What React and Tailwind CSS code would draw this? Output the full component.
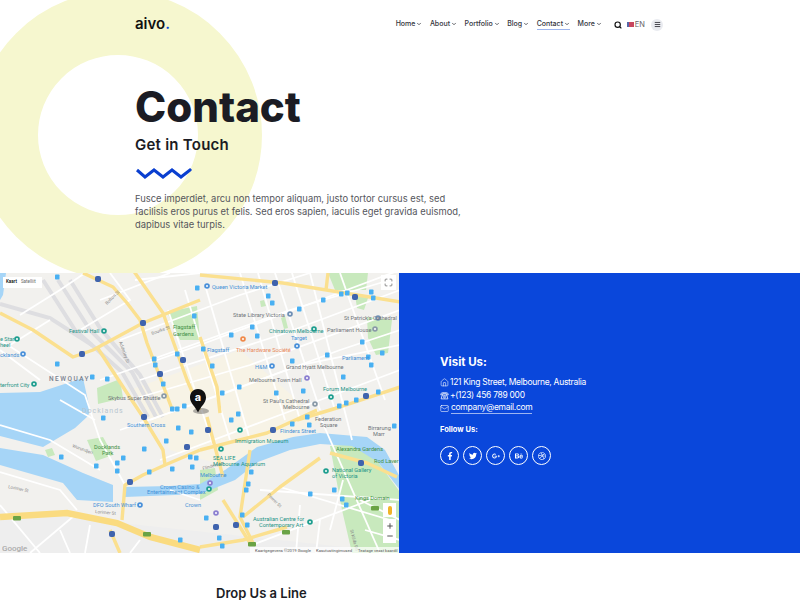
import { ChevronDown, Search, Home, Mail, Menu, Maximize, Plus, Minus } from "lucide-react";
import { FaFacebookF, FaTwitter, FaGooglePlusG, FaBehance, FaDribbble } from "react-icons/fa";

const navItems = ["Home", "About", "Portfolio", "Blog", "Contact", "More"];
const socials = [FaFacebookF, FaTwitter, FaGooglePlusG, FaBehance, FaDribbble];

const water = [
  "M0 393 L40 392 L83 378 L90 410 L88 416 L75 428 L43 447 L0 436 Z",
  "M0 448 L43 455 L83 473 L113 485 L113 502 L77 500 L63 483 L0 465 Z",
  "M125 487 L170 486 L200 484 L225 470 L257 447 L293 437 L320 433 L367 437 L385 450 L400 477 L400 490 L378 462 L352 446 L320 444 L290 450 L258 462 L235 480 L200 494 L125 497 Z",
  "M0 273 L6 273 L3 295 L0 300 Z",
];

const parks = [
  "M328 273 L368 273 L366 290 L335 290 Z",
  "M355 295 L368 298 L364 310 L357 308 Z",
  "M367 317 L392 320 L388 353 L376 355 L368 338 Z",
  "M167 312 L197 306 L200 340 L180 340 Z",
  "M97 388 L120 379 L123 398 L98 404 Z",
  "M87 440 L103 437 L113 455 L96 461 Z",
  "M45 450 L52 448 L55 455 L48 457 Z",
  "M330 446 L355 444 L378 462 L400 492 L400 553 L352 553 L342 510 Z",
  "M200 470 L215 468 L218 490 L200 500 Z",
  "M260 301 L264 300 L266 306 L261 307 Z",
  "M281 318 L285 316 L288 328 L284 329 Z",
];

const rail = [
  "M43 280 L75 330 L122 372 L148 417",
  "M58 280 L90 330 L132 372 L156 417",
  "M0 304 L50 318 L92 345",
  "M70 280 L100 328 L140 375 L163 417",
];

const roads = [
  "M0 313 L33 330 L73 357 L93 350 L143 323 L200 300",
  "M83 273 L113 287 L127 303 L140 320 L147 343 L160 377 L172 409",
  "M133 270 L163 313 L187 380 L200 410",
  "M97 347 L127 393 L143 417 L163 450 L165 465 L143 475 L125 485 L122 520",
  "M200 547 L243 540 L287 527",
  "M243 517 L280 487 L320 458",
  "M200 450 L267 433 L317 410",
  "M297 420 L340 407 L400 387",
  "M330 453 L367 463 L397 477",
  "M207 417 L223 477",
  "M250 450 L240 517 L253 543",
  "M223 500 L250 543",
  "M200 275 L283 283 L400 302",
  "M200 337 L217 387 L220 413",
  "M328 273 L326 290",
  "M165 465 L200 450",
  "M110 530 L120 553",
];

const streets = [
  "M0 340 L85 395 L100 440 L125 485",
  "M0 425 L50 440 L100 470",
  "M0 472 L60 490 L77 510",
  "M0 505 L40 553",
  "M100 380 L200 345 L320 300 L400 270",
  "M120 430 L220 395 L340 350 L400 330",
  "M130 400 L250 365 L400 310",
  "M160 460 L280 415 L400 370",
  "M135 280 L200 273",
  "M100 300 L170 273",
  "M120 340 L240 295 L310 273",
  "M150 360 L290 310 L390 280",
  "M140 380 L280 335 L400 290",
  "M150 420 L300 365 L400 345",
  "M240 273 L285 420",
  "M275 273 L320 410",
  "M205 285 L250 440",
  "M310 273 L352 440",
  "M168 310 L215 450",
  "M340 273 L385 400",
  "M185 290 L230 440",
  "M258 273 L300 420",
  "M292 273 L335 410",
  "M317 410 L380 553",
  "M260 490 L400 500",
  "M280 487 L390 520",
  "M343 480 L330 530",
  "M300 505 L296 553",
  "M320 520 L316 553",
  "M252 545 L370 500",
  "M170 490 L200 500",
  "M30 553 L75 515",
  "M70 553 L60 530",
  "M85 553 L90 525",
  "M130 553 L140 540",
  "M360 500 L400 520",
  "M365 530 L400 540",
  "M0 350 L40 380",
  "M20 315 L60 290 L85 273",
  "M10 345 L50 320",
  "M110 273 L130 300 L80 330",
  "M60 400 L95 420",
];

const transit = [
  [268, 296], [272, 303], [299, 309], [252, 327], [231, 335], [257, 336], [212, 366], [292, 361], [327, 355],
  [362, 342], [382, 353], [371, 365], [343, 377], [239, 387], [222, 393], [276, 393], [303, 391], [238, 414],
  [323, 300], [341, 294], [347, 293], [371, 292], [373, 298], [339, 406], [346, 403], [356, 400], [378, 392],
  [57, 277], [197, 288], [194, 316], [177, 354], [154, 359], [155, 365], [163, 384], [92, 377], [107, 379],
  [57, 364], [172, 409], [177, 409], [184, 406], [103, 418], [61, 457], [96, 466], [123, 458], [117, 463],
  [117, 471], [144, 449], [166, 441], [149, 472], [172, 469], [178, 428], [191, 432], [190, 457], [196, 458],
  [192, 467], [180, 540], [231, 420], [292, 424], [307, 417], [309, 425], [251, 472], [248, 484], [246, 490],
  [242, 515], [247, 525], [206, 518], [219, 538], [222, 546], [310, 494], [334, 490], [342, 499], [346, 505],
  [394, 426], [203, 349], [368, 357],
];

const shields = [
  [98, 279], [143, 323], [82, 354], [183, 360], [160, 374], [144, 417], [275, 283], [355, 297], [366, 396],
  [130, 482], [112, 534], [187, 447], [208, 430], [273, 430], [361, 463], [216, 527], [236, 525],
];

const greenShields = [[17, 518], [147, 534], [286, 532], [252, 544], [375, 508]];

const pois = [
  [207, 286, "#4a90d9"], [104, 331, "#1f9e8f"], [17, 339, "#1f9e8f"], [23, 354, "#4a90d9"], [34, 384, "#1f9e8f"],
  [164, 396, "#8a9aa8"], [290, 314, "#6f8fb5"], [314, 329, "#1f9e8f"], [297, 346, "#4a90d9"], [243, 339, "#f08a4b"],
  [272, 366, "#4a90d9"], [307, 378, "#8b7fd0"], [375, 329, "#8a9aa8"], [331, 397, "#1f9e8f"],
  [315, 404, "#8a9aa8"], [240, 430, "#1f9e8f"], [221, 449, "#1f9e8f"], [326, 471, "#1f9e8f"], [310, 522, "#1f9e8f"],
  [140, 505, "#4a90d9"], [210, 483, "#8b7fd0"], [216, 513, "#8b7fd0"], [209, 489, "#1f9e8f"], [378, 318, "#6f8fb5"],
];

const blue = "#3f8fd6";
const teal = "#1d9387";
const grey = "#70757a";
const green = "#3f8f45";

const labels = [
  [69, 333, "Festival Hall", teal],
  [173, 329, "Flagstaff", green],
  [173, 336, "Gardens", green],
  [0, 341, "e Star", teal],
  [0, 347, "heel", teal],
  [0, 357, "cklands", blue],
  [0, 387, "terfront City", teal],
  [108, 400, "Skybus Super Shuttle", grey],
  [212, 289, "Queen Victoria Market", blue],
  [233, 317, "State Library Victoria", grey],
  [269, 333, "Chinatown Melbourne", teal],
  [327, 332, "Parliament House", grey],
  [344, 320, "St Patrick's Cathedral", grey],
  [291, 340, "Target", blue],
  [207, 352, "Flagstaff", blue],
  [236, 352, "The Hardware Société", "#e8875a"],
  [342, 360, "Parliament", blue],
  [255, 369, "H&M", blue],
  [286, 369, "Grand Hyatt Melbourne", grey],
  [249, 382, "Melbourne Town Hall", grey],
  [323, 391, "Forum Melbourne", teal],
  [263, 403, "St Paul's Cathedral", grey],
  [283, 409, "Melbourne", grey],
  [315, 421, "Federation", grey],
  [320, 427, "Square", grey],
  [280, 433, "Flinders Street", blue],
  [235, 443, "Immigration Museum", teal],
  [213, 460, "SEA LIFE", teal],
  [213, 466, "Melbourne Aquarium", teal],
  [368, 430, "Birrarung", grey],
  [373, 436, "Marr", grey],
  [336, 451, "Alexandra Gardens", green],
  [374, 463, "Rod Laver", green],
  [332, 472, "National Gallery", teal],
  [332, 478, "of Victoria", teal],
  [355, 500, "Kings Domain", green],
  [253, 521, "Australian Centre for", teal],
  [259, 527, "Contemporary Art", teal],
  [127, 427, "Southern Cross", blue],
  [94, 449, "Docklands", green],
  [102, 455, "Park", green],
  [160, 489, "Crown Casino &", blue],
  [147, 494, "Entertainment Complex", blue],
  [93, 507, "DFO South Wharf", blue],
  [185, 507, "Crown", blue],
  [200, 477, "Melbourne", blue],
];

const streetNames = [
  [8, 488, "Lorimer St", 12],
  [95, 513, "Lorimer St", 5],
  [119, 342, "Adderley St", 70],
  [107, 305, "Bolton St", -45],
  [152, 335, "Bourke St", -20],
  [72, 447, "Wurundjeri", 20],
  [203, 470, "Flinders Ln", -15],
  [267, 495, "Power St", 45],
  [350, 530, "St Kilda Rd", 75],
];

function ContactMap() {
  return (
    <svg viewBox="0 273 399 280" className="w-full h-full block" style={{ fontFamily: "Roboto, sans-serif" }}>
      <rect x="0" y="273" width="399" height="280" fill="#f2f1ee" />
      <path d="M130 390 L240 350 L320 420 L240 470 L170 450 Z" fill="#f7f3e6" />
      <path d="M0 510 L400 553 L0 553 Z" fill="#eeeeee" />
      {parks.map((d) => (
        <path key={d} d={d} fill="#c8e9bd" />
      ))}
      {water.map((d) => (
        <path key={d} d={d} fill="#a6d5f7" />
      ))}
      {rail.map((d) => (
        <path key={d} d={d} fill="none" stroke="#dedee1" strokeWidth="4" />
      ))}
      {streets.map((d) => (
        <path key={d} d={d} fill="none" stroke="#ffffff" strokeWidth="1.8" />
      ))}
      {roads.map((d) => (
        <path key={d} d={d} fill="none" stroke="#fbe08f" strokeWidth="3.4" strokeLinejoin="round" />
      ))}
      <path d="M0 517 L67 513 L117 523 L150 537 L200 550" fill="none" stroke="#fadb80" strokeWidth="6.5" />
      {streetNames.map(([x, y, t, r]) => (
        <text key={t + x} x={x} y={y} fontSize="4.5" fill="#8a8a8a" transform={`rotate(${r} ${x} ${y})`}>
          {t}
        </text>
      ))}
      {transit.map(([x, y]) => (
        <rect key={`${x}-${y}`} x={x - 2} y={y - 2.5} width="4.5" height="5" rx="0.8" fill="#49b0f2" />
      ))}
      {shields.map(([x, y]) => (
        <rect key={`${x}-${y}`} x={x - 3} y={y - 3} width="6" height="6" rx="2" fill="#3f63ad" />
      ))}
      {greenShields.map(([x, y]) => (
        <rect key={`${x}-${y}`} x={x - 4} y={y - 2} width="8" height="4.5" rx="1" fill="#6aa345" />
      ))}
      {pois.map(([x, y, c]) => (
        <g key={`${x}-${y}`}>
          <circle cx={x} cy={y} r="2.8" fill={c} />
          <circle cx={x} cy={y} r="1" fill="#ffffff" />
        </g>
      ))}
      <text x="49" y="381" fontSize="6.5" fontWeight="500" letterSpacing="1.5" fill="#7a8290">
        NEWQUAY
      </text>
      <text x="82" y="413" fontSize="7" letterSpacing="1" fill="#b9c6cf">
        Docklands
      </text>
      {labels.map(([x, y, t, c]) => (
        <text key={t + x + y} x={x} y={y} fontSize="5.6" fill={c}>
          {t}
        </text>
      ))}

      {/* pin */}
      <ellipse cx="201" cy="411" rx="8" ry="3" fill="#555" opacity="0.45" />
      <path d="M198 389 C192.5 389 190 393.5 190 397.5 C190 403 195 406 198 412.5 C201 406 206 403 206 397.5 C206 393.5 203.5 389 198 389 Z" fill="#111" />
      <text x="198" y="401" fontSize="11" fontWeight="700" textAnchor="middle" fill="#fff" style={{ fontFamily: "Inter, sans-serif" }}>
        a
      </text>

      {/* map footer */}
      <text x="2" y="551" fontSize="8" fontWeight="500" fill="#9a9a9a" opacity="0.8">
        Google
      </text>
      <rect x="250" y="547" width="149" height="6" fill="#ffffff" opacity="0.7" />
      <text x="255" y="552" fontSize="4.2" fill="#555">
        Kaartgegevens ©2019 Google
      </text>
      <text x="316" y="552" fontSize="4.2" fill="#555">
        Kasutustingimused
      </text>
      <text x="358" y="552" fontSize="4.2" fill="#555">
        Teatage veast kaardil
      </text>
    </svg>
  );
}

export default function App() {
  return (
    <div className="relative h-[600px] overflow-hidden bg-white text-[#1b1c24]" style={{ fontFamily: "Inter, sans-serif" }}>
      {/* big ring behind hero */}
      <div className="absolute left-[-26px] top-[-9px] w-[288px] h-[288px] rounded-full border-[64px] border-[#f6f7cf]" />

      <header className="relative h-[49px] pl-[135px] pr-[137px] flex items-center justify-between">
        <div className="text-[15px] font-semibold text-[#111]">
          aivo<span className="text-[#0a47db]">.</span>
        </div>
        <nav className="flex items-center text-[7px] font-medium text-[#33343c]">
          <div className="flex items-center gap-[7.5px]">
            {navItems.map((item) => (
              <span
                key={item}
                className={item === "Contact" ? "flex items-center gap-[1px] border-b border-[#9db5ee]" : "flex items-center gap-[1px] border-b border-transparent"}
              >
                {item}
                <ChevronDown size={6} strokeWidth={3} />
              </span>
            ))}
          </div>
          <Search size={8} strokeWidth={3.5} className="ml-[12px] text-[#111]" />
          <span className="ml-[5px] w-[7px] h-[5px] bg-[#c8465e] border-l-2 border-[#5566a8]" />
          <span className="ml-[1px] text-[7.5px] font-normal text-[#666]">EN</span>
          <span className="ml-[6px] w-[12px] h-[12px] rounded-full bg-[#e9ebf0] flex items-center justify-center">
            <Menu size={7} strokeWidth={3} />
          </span>
        </nav>
      </header>

      <section className="relative h-[224px] pl-[135px] pt-[33px]">
        <h1 className="text-[42px] leading-[50px] font-extrabold">Contact</h1>
        <h2 className="mt-[3px] text-[15px] leading-[20px] font-semibold tracking-[0.25px]">Get in Touch</h2>
        <svg width="58" height="14" viewBox="0 0 58 14" className="mt-[11px] block" fill="none">
          <path d="M2 4 L10 11 L19 4 L28 11 L37 4 L46 11 L55 4 L56 5" stroke="#0a3fd0" strokeWidth="3" />
        </svg>
        <p className="mt-[12px] w-[335px] text-[9.4px] leading-[13px] text-[#55565c]">
          Fusce imperdiet, arcu non tempor aliquam, justo tortor cursus est, sed facilisis eros purus et felis. Sed eros
          sapien, iaculis eget gravida euismod, dapibus vitae turpis.
        </p>
      </section>

      <section className="relative flex h-[280px]">
        <div className="relative w-[399px] shrink-0">
          <ContactMap />
          <div className="absolute left-[3px] top-[4px] w-[39px] h-[11px] bg-white flex items-center text-[4.5px] px-[3px] gap-[4px]" style={{ fontFamily: "Roboto, sans-serif" }}>
            <span className="font-medium text-black">Kaart</span>
            <span className="text-[#666]">Satelliit</span>
          </div>
          <div className="absolute right-[3px] top-[2px] w-[15px] h-[15px] bg-white flex items-center justify-center text-[#666]">
            <Maximize size={9} strokeWidth={2} />
          </div>
          <div className="absolute right-[3px] bottom-[36px] w-[13px] h-[14px] bg-white flex items-center justify-center">
            <span className="w-[4px] h-[9px] rounded-full bg-[#f0b429]" />
          </div>
          <div className="absolute right-[3px] bottom-[10px] w-[13px] h-[24px] bg-white flex flex-col items-center justify-center gap-[2px] text-[#555]">
            <Plus size={8} strokeWidth={3} />
            <Minus size={8} strokeWidth={3} />
          </div>
        </div>

        <div className="flex-1 bg-[#0a47db] text-white pl-[41px] pt-[82px]">
          <h3 className="text-[11.5px] leading-[15px] font-bold">Visit Us:</h3>
          <ul className="mt-[6px] text-[8.5px] leading-[13px] tracking-[-0.3px]">
            <li className="flex items-center gap-[1px]">
              <Home size={9} strokeWidth={1.5} />
              121 King Street, Melbourne, Australia
            </li>
            <li className="flex items-center gap-[1px]">
              <svg width="9" height="9" viewBox="0 0 12 12" fill="none" stroke="currentColor" strokeWidth="1">
                <path d="M1 4 C1 1.5 11 1.5 11 4 L11 5 L8.5 5 L8.5 3.5 L3.5 3.5 L3.5 5 L1 5 Z" />
                <path d="M3 5.5 L9 5.5 L10.5 10.5 L1.5 10.5 Z" />
                <circle cx="6" cy="8" r="1.3" />
              </svg>
              +(123) 456 789 000
            </li>
            <li className="flex items-center gap-[1px]">
              <Mail size={9} strokeWidth={1.5} />
              <span className="ml-[1px] border-b border-white/60 leading-[11px]">company@email.com</span>
            </li>
          </ul>
          <h4 className="mt-[11px] text-[7.5px] leading-[10px] font-bold">Follow Us:</h4>
          <div className="mt-[11px] flex gap-[4px]">
            {socials.map((Icon, i) => (
              <span key={i} className="w-[19px] h-[19px] rounded-full border-[1.5px] border-white flex items-center justify-center">
                <Icon size={8} />
              </span>
            ))}
          </div>
        </div>
      </section>

      <section className="pl-[216px] pt-[32px]">
        <h2 className="text-[13px] leading-[16px] font-semibold">Drop Us a Line</h2>
      </section>
    </div>
  );
}
